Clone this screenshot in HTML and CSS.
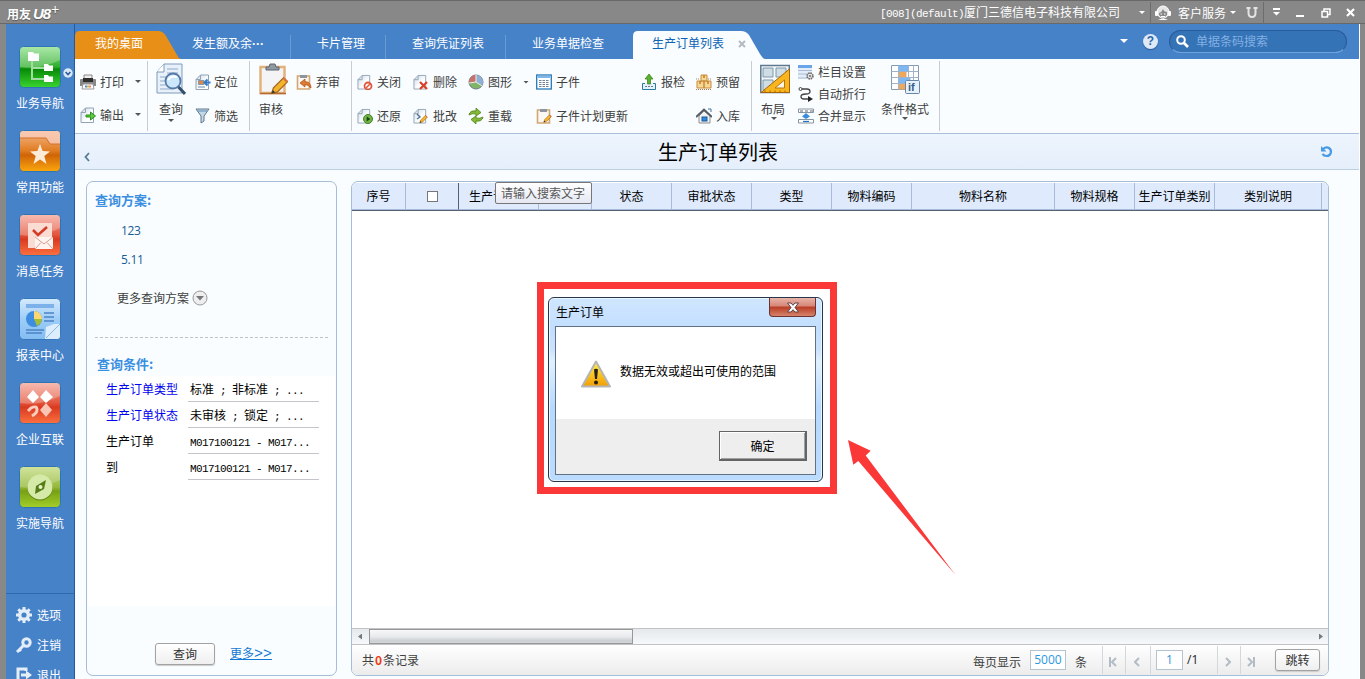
FILE: index.html
```
<!doctype html>
<html lang="zh-CN">
  <head>
    <meta charset="UTF-8" />
    <meta name="viewport" content="width=device-width, initial-scale=1.0" />
    <title>用友U8+ 生产订单列表</title>
    <link rel="stylesheet" href="styles.css">
  </head>
  <body>
    <!-- shared gradients and document shapes -->
    <svg class="defs" width="0" height="0">
      <defs>
        <linearGradient id="g-green" x2="0" y2="1"><stop offset="0" stop-color="#8fe08c" /><stop offset=".5" stop-color="#2fae2c" /><stop offset=".55" stop-color="#078a06" /><stop offset="1" stop-color="#3ad431" /></linearGradient>
        <linearGradient id="g-orange" x2="0" y2="1"><stop offset="0" stop-color="#f5b98c" /><stop offset=".5" stop-color="#e07b1f" /><stop offset=".6" stop-color="#cf6408" /><stop offset="1" stop-color="#fba70e" /></linearGradient>
        <linearGradient id="g-red" x2="0" y2="1"><stop offset="0" stop-color="#f6a596" /><stop offset=".5" stop-color="#e2543c" /><stop offset=".6" stop-color="#d83a20" /><stop offset="1" stop-color="#fb7040" /></linearGradient>
        <linearGradient id="g-blue" x2="0" y2="1"><stop offset="0" stop-color="#d5eafc" /><stop offset=".5" stop-color="#9fcdf7" /><stop offset="1" stop-color="#83bdf2" /></linearGradient>
        <linearGradient id="g-lime" x2="0" y2="1"><stop offset="0" stop-color="#c4dd83" /><stop offset=".5" stop-color="#96b93c" /><stop offset=".6" stop-color="#77a014" /><stop offset="1" stop-color="#a3cf2b" /></linearGradient>
        <linearGradient id="g-warn" x2="0" y2="1"><stop offset="0" stop-color="#fff04a" /><stop offset="1" stop-color="#f29d00" /></linearGradient>
        <linearGradient id="g-paper" x2="1" y2="1"><stop offset="0" stop-color="#c9d8e8" /><stop offset=".6" stop-color="#fff" /></linearGradient>
        <symbol id="page" viewBox="0 0 16 16"><path d="M1 5.500L5.500 1H13.500V15.500H1Z" fill="url(#g-paper)" stroke="#93a3b5" /><path d="M1 5.500H5.500V1" fill="none" stroke="#93a3b5" /></symbol>
        <symbol id="board" viewBox="0 0 16 16"><path d="M1.500 2H13.500V15H1.500Z" fill="#fbf8f3" stroke="#d3a672" stroke-width="1.600" /><path d="M4 1H11V4H4Z" fill="#8d969f" /></symbol>
        <symbol id="pencil" viewBox="0 0 12 12"><path d="M1 11L2.200 7.500L8.500 1.200L11 3.700L4.700 10Z" fill="#f5b32c" stroke="#a0661a" stroke-width=".8" /><path d="M1 11L1.800 8.800L3.200 10.200Z" fill="#333" /><path d="M8 1.800L10.400 4.200L11.400 3.200L9 .8Z" fill="#d6733f" /></symbol>
      </defs>
    </svg>

    <div class="window">
      <header class="titlebar">
        <div class="logo">用友<b>U8</b><sup>+</sup></div>
        <div class="company"><span class="mono">[008](default)</span>厦门三德信电子科技有限公司</div>
        <i class="caret light company-caret"></i>
        <div class="service">
          <svg width="16" height="16" viewBox="0 0 16 16"><circle cx="8" cy="7" r="6" fill="#e5e5e5" stroke="#fff" /><rect y="6" width="3" height="5" rx="1" fill="#fff" /><rect x="13" y="6" width="3" height="5" rx="1" fill="#fff" /><path d="M4 8Q7 7 8 4Q9 7 12 7V10Q8 15 4 10Z" fill="#888" /><path d="M5.500 9H7M9 9H10.500M6 11.500H10" stroke="#fff" /><path d="M3 15Q8 12 13 15Z" fill="#fff" /></svg>
          <span>客户服务</span>
          <i class="caret light"></i>
          <svg class="u-mark" width="12" height="12" viewBox="0 0 12 12"><path d="M.5 1H4.500M7.500 1H11.500M2.500 1V6Q2.500 10 6 10Q9.500 10 9.500 6V1" fill="none" stroke="#e4e4e4" stroke-width="2" /></svg>
        </div>
        <div class="window-buttons">
          <svg width="9" height="9" viewBox="0 0 9 9"><path d="M1 1H8" stroke="#fff" stroke-width="2" /><path d="M1 4H8L4.500 7.500Z" fill="#fff" /></svg>
          <svg width="9" height="9" viewBox="0 0 9 9"><path d="M0 8H8" stroke="#fff" stroke-width="2" /></svg>
          <svg width="10" height="10" viewBox="0 0 10 10"><path d="M3 3V1H9V6.500H7M1 3.500H6.500V9H1Z" fill="none" stroke="#fff" stroke-width="1.500" /></svg>
          <svg width="9" height="9" viewBox="0 0 9 9"><path d="M1 1L8 8M8 1L1 8" stroke="#fff" stroke-width="2.200" /></svg>
        </div>
      </header>

      <div class="app">
        <nav class="sidebar">
          <a class="module">
            <svg width="42" height="42" viewBox="0 0 42 42"><rect x=".5" y=".5" width="41" height="41" rx="4" fill="url(#g-green)" stroke="#2d75b5" /><path d="M1 21Q22 24 41 14V3Q41 1 39 1H3Q1 1 1 4Z" fill="#fff" opacity=".25" /><path d="M13 15V33H25M13 22H25" fill="none" stroke="#a2dda0" stroke-width="2" /><path d="M9 6H14L15 7.500H20V15H9Z M25 18H29L30 19.500H34V25H25Z M25 29H29L30 30.500H34V36H25Z" fill="#fff" /></svg>
            <span>业务导航</span>
            <svg class="module-more" width="10" height="10" viewBox="0 0 10 10"><circle cx="5" cy="5" r="4.700" fill="#dbe8f5" /><path d="M2.600 4L5 6.500L7.400 4" fill="none" stroke="#2a5c99" stroke-width="1.600" /></svg>
          </a>
          <a class="module">
            <svg width="42" height="42" viewBox="0 0 42 42"><rect x=".5" y=".5" width="41" height="41" rx="4" fill="url(#g-orange)" stroke="#2d75b5" /><path d="M1 8H27L31 14H41V4Q41 1 38 1H4Q1 1 1 4Z" fill="#f9cdbb" opacity=".8" /><path d="M1 8H27L31 14H41" fill="none" stroke="#d2702a" /><path d="M21 14L23.600 21L31 21.500L25.300 26L27.500 34L21 29.500L14.500 34L16.700 26L11 21.500L18.400 21Z" fill="#fdebd9" /></svg>
            <span>常用功能</span>
          </a>
          <a class="module">
            <svg width="42" height="42" viewBox="0 0 42 42"><rect x=".5" y=".5" width="41" height="41" rx="4" fill="url(#g-red)" stroke="#2d75b5" /><path d="M1 21Q22 24 41 14V3Q41 1 39 1H3Q1 1 1 4Z" fill="#fff" opacity=".25" /><path d="M9 9H33V27L15 34H9Z" fill="#fbdcd3" /><path d="M14 16L19 21L28 13" fill="none" stroke="#d33c26" stroke-width="2.600" /><rect x="16" y="23" width="18" height="12" fill="#fff4f0" /><path d="M16 23L25 30L34 23M16 35L22 28.500M34 35L28 28.500" fill="none" stroke="#d8a093" /></svg>
            <span>消息任务</span>
          </a>
          <a class="module">
            <svg width="42" height="42" viewBox="0 0 42 42"><rect x=".5" y=".5" width="41" height="41" rx="4" fill="url(#g-blue)" stroke="#3775bd" /><path d="M7 6H35V10H7Z" fill="#7db1ea" /><circle cx="15" cy="21" r="8" fill="#3d8ee0" /><path d="M15 21V13A8 8 0 0 1 23 21Z" fill="#fbd773" /><path d="M15 21H23A8 8 0 0 1 18 28Z" fill="#a3bd38" /><path d="M25 15H35M25 19H35M25 23H35M7 32H25M7 35H23" stroke="#4b84c6" stroke-width="1.300" /><path d="M26 41L27 29L35 26H41V38Q41 41 38 41Z" fill="#dcedfc" /><path d="M27 40L41 26" stroke="#8bb7e3" /></svg>
            <span>报表中心</span>
          </a>
          <a class="module">
            <svg width="42" height="42" viewBox="0 0 42 42"><rect x=".5" y=".5" width="41" height="41" rx="4" fill="url(#g-red)" stroke="#2d75b5" /><path d="M1 21Q22 24 41 14V3Q41 1 39 1H3Q1 1 1 4Z" fill="#fff" opacity=".25" /><path d="M14 8L20 15L14 21L8 15ZM27 8L34 15L27 21L21 15Z" fill="#fff" /><path d="M27 21L33 28L27 35L21 28Z" fill="#fbc5b5" /><path d="M9 29L12 26Q18 23 18 28Q18 31 13 34" fill="none" stroke="#fbcdbf" stroke-width="3" /></svg>
            <span>企业互联</span>
          </a>
          <a class="module">
            <svg width="42" height="42" viewBox="0 0 42 42"><rect x=".5" y=".5" width="41" height="41" rx="4" fill="url(#g-lime)" stroke="#2d75b5" /><path d="M1 21Q22 24 41 14V3Q41 1 39 1H3Q1 1 1 4Z" fill="#fff" opacity=".2" /><circle cx="21" cy="22" r="12.500" fill="#5d8414" /><circle cx="21" cy="21" r="12.500" fill="#d5e9a8" /><path d="M27 14L25 23L16 28L17 20Z" fill="#547d15" /><circle cx="21.500" cy="21" r="2" fill="#e7f2c9" /></svg>
            <span>实施导航</span>
          </a>
          <div class="side-links">
            <a><svg width="16" height="16" viewBox="0 0 16 16"><circle cx="8" cy="8" r="4.300" fill="none" stroke="#e4eef8" stroke-width="3.400" /><path d="M8 0V3M8 13V16M0 8H3M13 8H16M2.300 2.300L4.500 4.500M11.500 11.500L13.700 13.700M2.300 13.700L4.500 11.500M11.500 4.500L13.700 2.300" stroke="#e4eef8" stroke-width="3" /></svg><span>选项</span></a>
            <a><svg width="16" height="16" viewBox="0 0 16 16"><circle cx="10.500" cy="5.500" r="3.700" fill="none" stroke="#e4eef8" stroke-width="3" /><path d="M8 8L1 15M2.500 11.500L5 14" stroke="#e4eef8" stroke-width="3" /></svg><span>注销</span></a>
            <a><svg width="16" height="16" viewBox="0 0 16 16"><path d="M10 4V2H2V14H10V12" fill="none" stroke="#e4eef8" stroke-width="3" /><path d="M5 6.500H10V3.500L16 8L10 12.500V9.500H5Z" fill="#e4eef8" /></svg><span>退出</span></a>
          </div>
        </nav>

        <main class="main">
          <div class="tabs">
            <a class="tab tab-home">我的桌面</a>
            <a class="tab tab-ledger">发生额及余<span class="dots">···</span></a>
            <a class="tab tab-card">卡片管理</a>
            <a class="tab tab-voucher">查询凭证列表</a>
            <a class="tab tab-check">业务单据检查</a>
            <a class="tab tab-active">生产订单列表<svg width="8" height="8" viewBox="0 0 8 8"><path d="M1 1L7 7M7 1L1 7" stroke="#b3bac1" stroke-width="2" /></svg></a>
            <div class="tab-tools">
              <i class="caret light"></i>
              <span class="help">?</span>
              <div class="search">
                <svg width="13" height="13" viewBox="0 0 13 13"><circle cx="5" cy="5" r="3.800" fill="none" stroke="#fff" stroke-width="2" /><path d="M8 8L12 12" stroke="#fff" stroke-width="2.600" /></svg>
                <span>单据条码搜索</span>
              </div>
            </div>
          </div>

          <div class="toolbar">
            <div class="group group-print">
              <a class="tool"><svg width="16" height="16" viewBox="0 0 16 16"><path d="M4 1H12V6H4Z" fill="#eee" stroke="#888" /><path d="M0 6Q0 5 1 5H15Q16 5 16 6V12H0Z" fill="#888" /><path d="M3 4H13V8H3Z" fill="#2e2e2e" /><path d="M3 10H13L14 15H2Z" fill="#fff" stroke="#999" /><path d="M5 12.500H7" stroke="#3f8fe0" stroke-width="2" /><path d="M7 12.500H9" stroke="#e0b43f" stroke-width="2" /><path d="M9 12.500H11" stroke="#e58a6a" stroke-width="2" /></svg><span>打印</span><i class="caret"></i></a>
              <a class="tool"><svg width="16" height="16" viewBox="0 0 16 16"><use href="#page" width="16" height="16" /><path d="M6 8H10.500V5L15.500 9L10.500 13V10H6Z" fill="#5cc93c" stroke="#2d8f1f" /></svg><span>输出</span><i class="caret"></i></a>
            </div>

            <div class="group group-query">
              <a class="big"><svg width="30" height="32" viewBox="0 0 30 32"><path d="M1 9L8 1H26V30H1Z" fill="#e8f0f9" stroke="#7f9bbb" /><path d="M1 9H8V1" fill="#fff" stroke="#7f9bbb" /><path d="M11 6H22M11 10H22M4 14H10M4 18H9M4 22H10M4 26H16" stroke="#91abca" /><circle cx="17" cy="18" r="7.500" fill="#cce7fb" stroke="#547aa5" stroke-width="1.800" /><path d="M12 17Q15 12 21 14" fill="none" stroke="#fff" stroke-width="2" /><path d="M22.500 24L29 31" stroke="#33506f" stroke-width="3" /></svg><span>查询</span><i class="caret"></i></a>
              <div class="pair">
                <a class="tool"><svg width="16" height="16" viewBox="0 0 16 16"><use href="#page" width="16" height="16" /><path d="M3.500 6.500H9V10.500H3.500Z" fill="#d9894c" stroke="#8b96a3" /><path d="M3 13H10" stroke="#6f89a5" /><path d="M15.500 8.500H10M12.500 5.500L9.500 8.500L12.500 11.500" fill="none" stroke="#327cc9" stroke-width="2" /></svg><span>定位</span></a>
                <a class="tool"><svg width="16" height="16" viewBox="0 0 16 16"><path d="M1 1H14L9 8V13L6 15V8Z" fill="#c5d8e6" stroke="#60798e" /><path d="M3 3H12" stroke="#5b8cb5" /></svg><span>筛选</span></a>
              </div>
            </div>

            <div class="group group-audit">
              <a class="big"><svg width="30" height="32" viewBox="0 0 30 32"><rect x="1.500" y="4" width="24" height="26" fill="#f4f4f6" stroke="#e3b27c" stroke-width="2.500" /><path d="M1 30.500H27" stroke="#b66b30" stroke-width="1.500" /><path d="M7 7V4H10L11 1H16L17 4H20V7Z" fill="#8f99a3" stroke="#5e6770" /><use href="#pencil" x="11" y="13" width="19" height="19" /></svg><span>审核</span></a>
              <div class="pair">
                <a class="tool"><svg width="16" height="16" viewBox="0 0 16 16"><use href="#board" width="16" height="16" /><path d="M4 9L9 5V7.500Q15 8 15 14Q12 10.500 9 10.500V13Z" fill="#df7b31" stroke="#a84d15" stroke-width=".7" /></svg><span>弃审</span></a>
              </div>
            </div>

            <div class="group group-edit">
              <a class="tool"><svg width="16" height="16" viewBox="0 0 16 16"><use href="#page" width="15" height="16" /><circle cx="11" cy="12" r="3.500" fill="#fff" stroke="#e25438" stroke-width="1.800" /><path d="M9 14L13 10" stroke="#e25438" stroke-width="1.500" /></svg><span>关闭</span></a>
              <a class="tool"><svg width="16" height="16" viewBox="0 0 16 16"><use href="#page" width="15" height="16" /><path d="M7 8L14 15M14 8L7 15" stroke="#dc4028" stroke-width="2.200" /></svg><span>删除</span></a>
              <a class="tool"><svg width="16" height="16" viewBox="0 0 16 16"><circle cx="8" cy="8" r="7" fill="#80b568" stroke="#727b83" /><path d="M8 8V1A7 7 0 0 1 14 11.500Z" fill="#8eb0d7" /><path d="M8 8V1A7 7 0 0 0 1 9Z" fill="#c5736b" /><path d="M8 1V8L1 9M8 8L14 12" fill="none" stroke="#eee" /></svg><span>图形</span><i class="caret"></i></a>
              <a class="tool"><svg width="16" height="16" viewBox="0 0 16 16"><rect x=".7" y="1" width="14.600" height="14" fill="#fff" stroke="#2678b8" stroke-width="1.300" /><path d="M1.500 3H14.500" stroke="#7db8ec" stroke-width="2" /><path d="M3 6.500H13M3 8.500H13M3 10.500H13M3 12.500H13" stroke="#718395" stroke-dasharray="2.500 1" /></svg><span>子件</span></a>
              <a class="tool"><svg width="16" height="16" viewBox="0 0 16 16"><path d="M4 9.500H1.500V15.500H14.500V9.500H12" fill="#e6f2fb" stroke="#2b7d9e" /><path d="M8 0L12 5H9.500V10H6.500V5H4Z" fill="#5bb22c" stroke="#367b19" stroke-width=".7" /><path d="M4 12.500H12" stroke="#6a7c88" stroke-dasharray="2 1" /></svg><span>报检</span></a>
              <a class="tool"><svg width="16" height="16" viewBox="0 0 16 16"><path d="M5 1H11V7H5ZM1 7H8V14H1ZM8 7H15V14H8Z" fill="#f6d895" stroke="#c58b3d" /><path d="M8 1V4M4 7V10M12 7V10" stroke="#d3761f" stroke-width="1.500" /><path d="M0 5H4M12 5H16M0 15.500H16" stroke="#a68152" stroke-dasharray="1 1" /></svg><span>预留</span></a>
              <a class="tool"><svg width="16" height="16" viewBox="0 0 16 16"><use href="#page" width="15" height="16" /><circle cx="11" cy="11" r="4.500" fill="#72b545" stroke="#3f8426" /><path d="M9.700 8.500L13.300 11L9.700 13.500Z" fill="#183f15" /></svg><span>还原</span></a>
              <a class="tool"><svg width="16" height="16" viewBox="0 0 16 16"><use href="#page" width="15" height="16" /><path d="M4 6L7 9L4 11" fill="none" stroke="#4d6f91" stroke-width="1.300" /><use href="#pencil" x="6" y="6" width="9" height="10" /></svg><span>批改</span></a>
              <a class="tool"><svg width="16" height="16" viewBox="0 0 16 16"><path d="M1 7Q2 2 8 3V0L13 4.500L8 8V6Q4 5 1 7ZM15 9Q14 14 8 13V16L3 11.500L8 8V10Q12 11 15 9Z" fill="#85b936" stroke="#4f8118" stroke-width=".8" /></svg><span>重载</span></a>
              <a class="tool"><svg width="16" height="16" viewBox="0 0 16 16"><use href="#board" width="16" height="16" /><use href="#pencil" x="7" y="6" width="9" height="9" /></svg><span>子件计划更新</span></a>
              <a class="tool tool-stock"><svg width="16" height="16" viewBox="0 0 16 16"><path d="M3 8V15H14V8L8 3Z" fill="#f2f2f2" stroke="#8a8f94" /><path d="M0 9L8 1.500L16 9" fill="none" stroke="#535b64" stroke-width="2" /><rect x="6" y="9" width="5" height="4" fill="#2c8de0" stroke="#1b5a96" /><path d="M12 1H15V4" fill="none" stroke="#40709d" /></svg><span>入库</span></a>
            </div>

            <div class="group group-layout">
              <a class="big big-layout"><svg width="30" height="30" viewBox="0 0 30 30"><rect x=".8" y="1.500" width="28.500" height="27" fill="#f4f8fb" stroke="#60788e" stroke-width="1.500" /><path d="M3 4H13V13H3ZM16 4H26V13H16ZM3 16H13V26H3Z" fill="#cfdee5" stroke="#7e98ab" /><path d="M29.500 5V28.500H1Z" fill="#f9b51c" stroke="#a76409" /><path d="M24.500 16V24H15Z" fill="#fdf5df" stroke="#b97712" /><path d="M5 28V26.500M10 28V26.500M15 28V26.500M20 28V26.500M25 28V26.500" stroke="#a76409" /></svg><span>布局</span><i class="caret"></i></a>
              <div class="triple">
                <a class="tool"><svg width="16" height="16" viewBox="0 0 16 16"><path d="M0 1H14V15H0Z" fill="#e4edf7" /><path d="M0 2.500H14" stroke="#6aa5e8" stroke-width="3" /><path d="M0 6.500H14M0 10H14M0 14H9" stroke="#a8bdd5" /><circle cx="12" cy="12" r="2.800" fill="#fff" stroke="#666" stroke-width="1.800" stroke-dasharray="1.500 .7" /><circle cx="12" cy="12" r="1" fill="#666" /></svg><span>栏目设置</span></a>
                <a class="tool"><svg width="16" height="16" viewBox="0 0 16 16"><circle cx="2.500" cy="3" r="1.500" fill="#fff" stroke="#444" /><path d="M4 3H9Q12 3 12 5.500Q12 8 8 8Q3 8 3 10.500Q3 13 6 13H12" fill="none" stroke="#444" stroke-width="1.300" /><path d="M10 10L15 13L10 16Z" fill="#222" /></svg><span>自动折行</span></a>
                <a class="tool"><svg width="16" height="16" viewBox="0 0 16 16"><path d="M.5 1H15.500V4.500H.5ZM.5 11.500H15.500V15H.5Z" fill="#fff" stroke="#8795a2" /><path d="M2 3H5M7 3H10M12 3H15" stroke="#667" /><path d="M5 13.500H11" stroke="#2874c8" stroke-width="1.300" /><path d="M8 5L12 8.500L8 11L4 8.500Z" fill="#3c8cdc" /></svg><span>合并显示</span></a>
              </div>
              <a class="big"><svg width="30" height="30" viewBox="0 0 30 30"><path d="M1.500 1.500H28.500V25.500H1.500Z" fill="#fff" stroke="#829bb7" /><path d="M8.500 1.500H18.500V7.500H8.500Z" fill="#7db8f2" /><path d="M8.500 7.500H16.500V13.500H8.500Z" fill="#efa75b" /><path d="M8.500 13.500H20.500V19.500H8.500Z" fill="#7db8f2" /><path d="M8.500 19.500H16.500V25.500H8.500Z" fill="#efa75b" /><path d="M1.500 7.500H28.500M1.500 13.500H28.500M1.500 19.500H28.500M8.500 1.500V25.500M18.500 1.500V25.500M23.500 1.500V25.500" stroke="#9fb4ca" /><rect x="15.500" y="16.500" width="14" height="13" rx="1" fill="#e8f1fa" stroke="#6787a8" /><text class="if-text" x="18" y="27">if</text></svg><span>条件格式</span><i class="caret"></i></a>
            </div>
          </div>

          <div class="page-title">
            <svg width="6" height="10" viewBox="0 0 6 10"><path d="M5 1L1.500 5L5 9" fill="none" stroke="#557c94" stroke-width="1.800" /></svg>
            <h1>生产订单列表</h1>
            <svg width="13" height="13" viewBox="0 0 13 13"><path d="M3 4Q6 1.500 9 3Q11.500 4.800 10.800 7.800Q9.800 11 6.500 11Q4 11 2.500 9" fill="none" stroke="#4799e3" stroke-width="2.200" /><path d="M1 1V6.500H6.500Z" fill="#4799e3" /></svg>
          </div>

          <div class="workspace">
            <section class="filters">
              <h2>查询方案:</h2>
              <a class="scheme">123</a>
              <a class="scheme">5.11</a>
              <div class="more-schemes">更多查询方案<svg width="16" height="16" viewBox="0 0 16 16"><circle cx="8" cy="8" r="7" fill="#eee" stroke="#999" /><path d="M4 6H12L8 10.500Z" fill="#777" /></svg></div>
              <h2 class="conditions-title">查询条件:</h2>
              <div class="conditions">
                <div class="condition"><label class="linked">生产订单类型</label><div class="value">标准<span> ; </span>非标准<span> ; ...</span></div></div>
                <div class="condition"><label class="linked">生产订单状态</label><div class="value">未审核<span> ; </span>锁定<span> ; ...</span></div></div>
                <div class="condition"><label>生产订单</label><div class="value"><span>M017100121 - M017...</span></div></div>
                <div class="condition"><label>到</label><div class="value"><span>M017100121 - M017...</span></div></div>
              </div>
              <div class="filter-actions">
                <button class="btn btn-query">查询</button>
                <a class="more-link">更多<span>&gt;&gt;</span></a>
              </div>
            </section>

            <section class="list">
              <div class="list-head">
                <div class="col">序号</div>
                <div class="col col-check"><span class="checkbox"></span></div>
                <div class="col col-order">生产订单号</div>
                <div class="col"></div>
                <div class="col">状态</div>
                <div class="col">审批状态</div>
                <div class="col">类型</div>
                <div class="col">物料编码</div>
                <div class="col">物料名称</div>
                <div class="col">物料规格</div>
                <div class="col">生产订单类别</div>
                <div class="col">类别说明</div>
                <div class="col col-last"></div>
                <div class="tooltip">请输入搜索文字</div>
              </div>
              <div class="list-body"></div>
              <div class="scrollbar">
                <i class="scroll-left"></i>
                <div class="thumb"></div>
                <i class="scroll-right"></i>
              </div>
              <footer class="pager">
                <div class="total">共<b>0</b>条记录</div>
                <span class="per-page">每页显示</span>
                <div class="field field-size">5000</div>
                <span class="unit">条</span>
                <div class="page-nav nav-first"><svg width="8" height="10" viewBox="0 0 8 10"><path d="M1 0V10M7 1L3 5L7 9" fill="none" stroke="#b3bcc5" stroke-width="2" /></svg></div>
                <div class="page-nav nav-prev"><svg width="6" height="10" viewBox="0 0 6 10"><path d="M5 1L1 5L5 9" fill="none" stroke="#b3bcc5" stroke-width="2" /></svg></div>
                <div class="page-nav nav-current"><div class="field field-page">1</div><span>/1</span></div>
                <div class="page-nav nav-next"><svg width="6" height="10" viewBox="0 0 6 10"><path d="M1 1L5 5L1 9" fill="none" stroke="#b3bcc5" stroke-width="2" /></svg></div>
                <div class="page-nav nav-last"><svg width="8" height="10" viewBox="0 0 8 10"><path d="M7 0V10M1 1L5 5L1 9" fill="none" stroke="#b3bcc5" stroke-width="2" /></svg></div>
                <button class="btn btn-jump">跳转</button>
              </footer>
            </section>
          </div>
        </main>
      </div>
    </div>

    <div class="highlight">
      <div class="dialog">
        <div class="dialog-title"><span>生产订单</span><div class="dialog-close"><svg width="14" height="11" viewBox="0 0 14 11"><path d="M1.500 1H5L7 3.300L9 1H12.500L9 5.500L12.500 10H9L7 7.700L5 10H1.500L5 5.500Z" fill="#fff" stroke="#5b4347" /></svg></div></div>
        <div class="dialog-client">
          <div class="dialog-message">
            <svg width="32" height="29" viewBox="0 0 32 29"><path d="M16 1.500L30 26.500H2Z" fill="url(#g-warn)" stroke="#b5b5b5" stroke-width="2" stroke-linejoin="round" /><path d="M14 9.500Q16 8 18 9.500L17 19H15Z" fill="#241f12" /><circle cx="16" cy="22.500" r="2" fill="#241f12" /></svg>
            <span>数据无效或超出可使用的范围</span>
          </div>
          <div class="dialog-buttons"><button class="ok">确定</button></div>
        </div>
      </div>
    </div>
    <svg class="pointer" width="110" height="138" viewBox="0 0 110 138"><path d="M0 0L22.700 10.700L17.700 15.500L107.500 135L10.300 21L5.300 24.700Z" fill="#fb3838" /></svg>
  </body>
</html>
```

FILE: styles.css
```
* {
  box-sizing: border-box;
}
body {
  margin: 0;
  width: 1365px;
  height: 679px;
  overflow: hidden;
  position: relative;
  background: #888;
  font-family: "Noto Sans CJK SC", sans-serif;
  font-size: 12px;
  line-height: 16px;
  color: #404040;
}
svg {
  display: block;
  flex: none;
}
.defs {
  position: absolute;
}
a,
span,
label {
  white-space: nowrap;
}
button {
  font: inherit;
  padding: 0;
}
.mono {
  font-family: "Liberation Mono", monospace;
  font-size: 11px;
  letter-spacing: -0.6px;
}
.caret {
  flex: none;
  width: 6px;
  height: 3px;
  background: #555;
  clip-path: polygon(0 0, 100% 0, 50% 100%);
}
.caret.light {
  background: #fff;
}
.window {
  height: 679px;
  display: flex;
  flex-direction: column;
}

/* title bar */
.titlebar {
  height: 24px;
  flex: none;
  display: flex;
  align-items: center;
  padding: 1px 10px 0 7px;
  border-top: 1px solid #686868;
  border-bottom: 1px solid #686868;
  color: #fff;
}
.logo {
  display: flex;
  align-items: center;
  padding-top: 2px;
  font-size: 12px;
  font-weight: bold;
  text-shadow: 0 1px 1px #555;
}
.logo b {
  font-family: "Liberation Sans", sans-serif;
  font-size: 15px;
  font-style: italic;
  letter-spacing: -1px;
  margin-left: 2px;
}
.logo sup {
  font-size: 14px;
  font-weight: normal;
  line-height: 10px;
  margin: -10px 0 0 1px;
}
.company {
  margin-left: auto;
  white-space: nowrap;
}
.company-caret {
  margin: 0 5px 0 19px;
}
.service {
  display: flex;
  align-items: center;
  height: 22px;
  width: 114px;
  padding-left: 4px;
  border-left: 1px solid #6c6c6c;
  border-right: 1px solid #6c6c6c;
}
.service span {
  margin: 0 4px 0 7px;
}
.u-mark {
  margin-left: 10px;
}
.window-buttons {
  display: flex;
  align-items: center;
  width: 91px;
  padding-left: 8px;
  justify-content: space-between;
}

/* left module bar */
.app {
  flex: 1;
  min-height: 0;
  display: flex;
  padding: 0 5px 0 6px;
}
.sidebar {
  width: 69px;
  flex: none;
  padding-top: 22px;
  background: #4682c8;
  border-right: 1px solid #2458a0;
  color: #fff;
  overflow: hidden;
}
.module {
  display: flex;
  flex-direction: column;
  align-items: center;
  height: 84px;
  position: relative;
}
.module span {
  line-height: 30px;
}
.module-more {
  position: absolute;
  right: 1px;
  top: 22px;
}
.side-links {
  margin-top: 43px;
  padding: 6px 0 0 10px;
  border-top: 1px solid #2f68ae;
}
.side-links a {
  height: 30px;
  display: flex;
  align-items: center;
  gap: 5px;
}

/* tabs */
.main {
  flex: 1;
  min-width: 0;
  display: flex;
  flex-direction: column;
  background: #f9fdff;
  border-right: 1px solid #fff;
}
.tabs {
  height: 35px;
  flex: none;
  display: flex;
  align-items: flex-end;
  background: #4682c8;
  color: #fff;
}
.tab {
  height: 24px;
  line-height: 16px;
  border-right: 1px solid #6a9ad2;
}
.dots {
  font: bold 12px/16px "Liberation Sans", sans-serif;
}
.tab-home {
  width: 106px;
  height: 28px;
  padding: 4px 0 0 20px;
  border: 0;
  background: #e88f18;
  clip-path: path("M0 28V5Q0 0 5 0H83Q88 0 91 5L102 24Q104 28 106 28Z");
}
.tab-ledger {
  width: 110px;
  padding-left: 11px;
}
.tab-card {
  width: 95px;
  padding-left: 26px;
}
.tab-voucher {
  width: 120px;
  padding-left: 26px;
}
.tab-check {
  width: 127px;
  padding-left: 26px;
  border: 0;
}
.tab-active {
  width: 132px;
  height: 28px;
  display: flex;
  align-items: flex-start;
  padding: 4px 0 0 19px;
  border: 0;
  background: #f9fdff;
  color: #0d63b5;
  clip-path: path("M0 28V5Q0 0 5 0H108Q113 0 116 4L127 23Q130 28 132 28Z");
}
.tab-active svg {
  margin: 5px 0 0 14px;
}
.tab-tools {
  margin-left: auto;
  height: 35px;
  padding: 0 12px 1px 0;
  display: flex;
  align-items: center;
}
.tab-tools .caret {
  width: 8px;
  height: 4px;
}
.help {
  width: 15px;
  height: 15px;
  margin: 0 11px 0 15px;
  border-radius: 50%;
  background: #dde9f6;
  color: #2c65a8;
  font: bold 12px/15px "Liberation Sans", sans-serif;
  text-align: center;
  box-shadow: 0 1px 1px #285c9b;
}
.search {
  width: 178px;
  height: 23px;
  padding: 0 0 0 6px;
  display: flex;
  align-items: center;
  gap: 7px;
  border: 1px solid #2a5b9b;
  border-bottom-color: #6ea2dc;
  border-radius: 12px;
  background: #3573b7;
  color: #82b0e2;
}

/* ribbon */
.toolbar {
  height: 75px;
  flex: none;
  display: flex;
  border-bottom: 1px solid #a9c0d8;
}
.group {
  height: 70px;
  margin-top: 2px;
  padding-top: 4px;
  display: flex;
  border-right: 1px solid #c9ccd0;
}
.tool {
  display: flex;
  align-items: center;
  gap: 4px;
  height: 34px;
}
.big {
  display: flex;
  flex-direction: column;
  align-items: center;
  margin-top: -2px;
}
.big span {
  margin-top: 6px;
}
.big .caret {
  margin-top: 2px;
}
.group-print {
  width: 73px;
  padding-left: 5px;
  flex-direction: column;
}
.group-print .caret {
  margin-left: 7px;
}
.group-query {
  width: 102px;
  padding-left: 8px;
  gap: 9px;
}
.group-query .tool {
  gap: 3px;
}
.group-audit {
  width: 102px;
  padding-left: 9px;
  gap: 7px;
}
.group-audit .big {
  align-items: flex-start;
}
.group-edit {
  width: 400px;
  padding-left: 5px;
  display: grid;
  grid-template-columns: 56px 55px 68px 105px 55px 55px;
  grid-template-rows: 34px 34px;
}
.group-edit .caret {
  margin-left: 7px;
}
.tool-stock {
  grid-column: 6;
}
.group-layout {
  width: 188px;
  padding-left: 8px;
}
.group-layout > .big {
  margin-top: -1px;
}
.group-layout > .big span {
  margin-top: 7px;
}
.group-layout > .big .caret {
  margin-top: 0;
}
.big-layout {
  width: 30px;
  align-items: flex-start;
}
.big-layout span {
  margin-left: 1px;
}
.big-layout .caret {
  margin-left: 11px;
}
.triple {
  margin: -4px 15px 0 8px;
}
.triple .tool {
  height: 22px;
}
.if-text {
  font: bold 11px "Liberation Sans", sans-serif;
  fill: #365d86;
}

/* page heading */
.page-title {
  height: 36px;
  flex: none;
  display: flex;
  align-items: center;
  justify-content: space-between;
  padding: 0 26px 0 9px;
  background: linear-gradient(#edf4fd, #e5effb);
  border-bottom: 1px solid #bccfe0;
}
.page-title > svg:first-child {
  margin-top: 10px;
}
.page-title h1 {
  margin: 0 0 0 26px;
  font-size: 20px;
  line-height: 28px;
  font-weight: normal;
  color: #000;
}
.workspace {
  flex: 1;
  min-height: 0;
  display: flex;
  gap: 14px;
  padding: 11px 30px 3px 11px;
}

/* filter panel */
.filters {
  width: 251px;
  flex: none;
  padding: 10px 1px 10px;
  display: flex;
  flex-direction: column;
  border: 1px solid #a5bdd6;
  border-radius: 7px;
}
.filters h2 {
  margin: 0 0 8px 7px;
  font-size: 13px;
  line-height: 16px;
  color: #3b8fe0;
}
.scheme {
  height: 29px;
  padding-left: 33px;
  font: 12px/29px "Open Sans", sans-serif;
  letter-spacing: -0.3px;
  color: #185c94;
}
.more-schemes {
  display: flex;
  align-items: center;
  gap: 3px;
  height: 16px;
  margin: 16px 7px 31px;
  padding-left: 22px;
}
.filters .conditions-title {
  margin: 0 7px 4px;
  padding: 18px 0 0 2px;
  border-top: 1px dashed #bcc3ca;
}
.conditions {
  height: 230px;
  background: #fff;
  color: #000;
}
.condition {
  display: flex;
  height: 26px;
  padding-left: 18px;
}
.condition label {
  width: 82px;
  line-height: 26px;
}
.condition .linked {
  color: #0000f0;
}
.value {
  width: 131px;
  padding-left: 2px;
  line-height: 25px;
  white-space: pre;
  border-bottom: 1px solid #c4c4cb;
}
.value span {
  font-family: "Liberation Mono", monospace;
  font-size: 11px;
  letter-spacing: -0.6px;
  white-space: pre;
}
.filter-actions {
  margin-top: auto;
  display: flex;
  align-items: center;
  gap: 15px;
  padding-left: 67px;
}
.btn {
  height: 22px;
  border: 1px solid #a2a2a2;
  border-radius: 3px;
  background: linear-gradient(#fff, #efefef);
  color: #333;
  line-height: 18px;
  box-shadow: 0 1px 1px #ccc;
}
.btn-query {
  width: 60px;
}
.more-link {
  color: #1478d2;
  text-decoration: underline;
}
.more-link span {
  font-family: "Liberation Mono", monospace;
  font-size: 15px;
}

/* order list */
.list {
  flex: 1;
  min-width: 0;
  display: flex;
  flex-direction: column;
  border: 1px solid #a5bdd6;
  border-radius: 7px;
  background: #fff;
  overflow: hidden;
}
.list-head {
  height: 29px;
  flex: none;
  display: grid;
  grid-template-columns: 54px 53px 80px 53px 80px 80px 80px 80px 143px 80px 80px 107px 1fr;
  position: relative;
  padding-top: 1px;
  border-bottom: 1px solid #56616e;
  color: #000;
}
.col {
  display: flex;
  align-items: center;
  justify-content: center;
  background: #dfebfd;
  border-right: 1px solid #a9bbdc;
  border-bottom: 1px solid #a9bbdc;
  white-space: nowrap;
  overflow: hidden;
}
.col-check {
  border-right-color: #56616e;
}
.col-order {
  justify-content: flex-start;
  padding-left: 10px;
}
.col-last {
  border-right: 0;
}
.checkbox {
  width: 11px;
  height: 11px;
  border: 1px solid #777;
  background: #fff;
}
.tooltip {
  position: absolute;
  left: 143px;
  top: 0;
  width: 97px;
  height: 22px;
  padding-left: 5px;
  line-height: 20px;
  border: 1px solid #777;
  border-radius: 2px;
  background: linear-gradient(#fff, #e6e8f2);
  color: #575757;
}
.list-body {
  flex: 1;
}
.scrollbar {
  height: 17px;
  flex: none;
  display: flex;
  align-items: center;
  justify-content: space-between;
  padding: 0 5px 0 6px;
  background: linear-gradient(#e5e9ec, #f6f8fa);
  border-top: 1px solid #c1c3c6;
  border-bottom: 1px solid #c1c3c6;
}
.scroll-left,
.scroll-right {
  width: 4px;
  height: 6px;
  background: #777;
  clip-path: polygon(100% 0, 100% 100%, 0 50%);
}
.scroll-right {
  clip-path: polygon(0 0, 100% 50%, 0 100%);
}
.thumb {
  width: 264px;
  height: 15px;
  margin: 0 auto 0 7px;
  border: 1px solid #979797;
  background: linear-gradient(#f8f8f8, #e8eaec 50%, #cbcfd3 85%, #d5d9dc);
}
.pager {
  height: 30px;
  flex: none;
  display: flex;
  align-items: center;
  padding: 0 8px 0 10px;
  background: linear-gradient(#fff, #ececec);
}
.total b {
  margin: 0 1px;
  color: #f03a13;
}
.per-page {
  margin-left: auto;
  padding-top: 3px;
}
.unit {
  margin: 3px 15px 0 9px;
}
.field {
  height: 20px;
  border: 1px solid #b7c3cd;
  background: #fff;
  color: #2e96df;
  font: 12px/18px "Open Sans", sans-serif;
  text-align: center;
}
.field-size {
  width: 36px;
  margin-left: 9px;
}
.page-nav {
  height: 28px;
  display: flex;
  align-items: center;
  padding-top: 3px;
  border-left: 1px solid #d3d8dd;
}
.nav-first {
  width: 23px;
  padding-left: 6px;
}
.nav-prev {
  width: 25px;
  padding-left: 8px;
}
.nav-current {
  width: 67px;
  padding: 0 0 0 5px;
  color: #222;
}
.nav-current span {
  margin-left: 4px;
  font: 12px/18px "Open Sans", sans-serif;
}
.field-page {
  width: 27px;
}
.nav-next {
  width: 23px;
  padding-left: 7px;
}
.nav-last {
  width: 35px;
  padding-left: 6px;
}
.btn-jump {
  width: 45px;
}

/* message box over the list */
.highlight {
  position: absolute;
  left: 537px;
  top: 282px;
  width: 300px;
  height: 212px;
  padding: 8px 4px;
  border: 7px solid #fb3838;
}
.dialog {
  width: 275px;
  height: 185px;
  padding: 0 6px;
  border: 1px solid #27384c;
  border-radius: 6px;
  background: linear-gradient(#d0e6ff, #c2deff 17%, #cbe2fc 28%, #e0f0ff 35%, #b7d9ff 60%, #bcdcff);
  box-shadow: inset 0 0 0 1px #e9f5ff;
}
.dialog-title {
  height: 28px;
  display: flex;
  justify-content: space-between;
  line-height: 27px;
  padding-left: 1px;
  color: #000;
}
.dialog-close {
  width: 47px;
  height: 19px;
  display: flex;
  align-items: center;
  justify-content: center;
  border: 1px solid #6b3333;
  border-top: 0;
  border-radius: 0 0 4px 4px;
  background: linear-gradient(#eab4a8, #d58576 45%, #b93c24 50%, #d6836b);
}
.dialog-client {
  height: 149px;
  border: 1px solid #5f7183;
  background: #eee;
}
.dialog-message {
  height: 92px;
  display: flex;
  gap: 8px;
  padding: 33px 0 0 24px;
  background: #fff;
  color: #000;
  line-height: 22px;
}
.dialog-buttons {
  display: flex;
  justify-content: flex-end;
  padding: 12px 8px 0 0;
}
.ok {
  width: 88px;
  height: 30px;
  border: 1px solid #646464;
  border-right-width: 2px;
  border-bottom-width: 2px;
  background: #eee;
  color: #000;
  box-shadow: inset 1px 1px #fff, inset -1px -1px #a0a0a0;
}
.pointer {
  position: absolute;
  left: 848px;
  top: 440px;
}
```
